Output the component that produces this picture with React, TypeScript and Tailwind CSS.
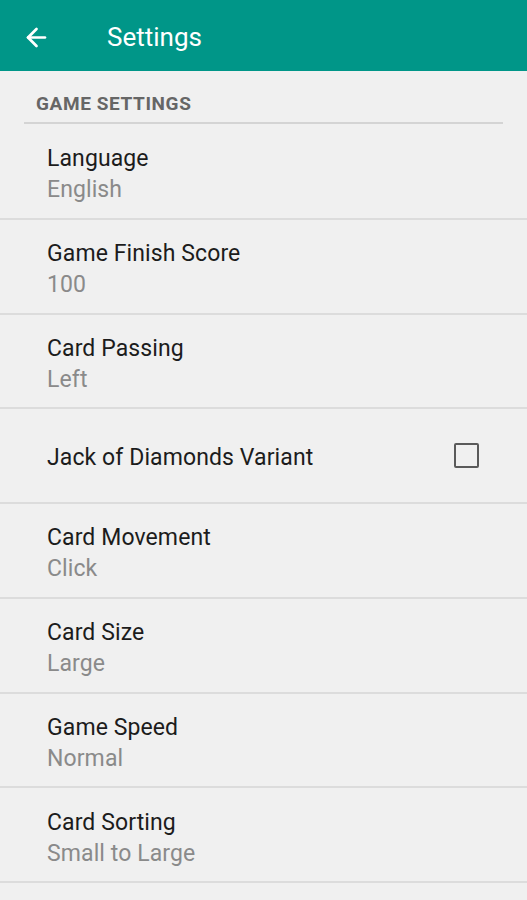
import { ArrowLeft } from 'lucide-react'

const items: { title: string; value?: string; checkbox?: boolean }[] = [
  { title: 'Language', value: 'English' },
  { title: 'Game Finish Score', value: '100' },
  { title: 'Card Passing', value: 'Left' },
  { title: 'Jack of Diamonds Variant', checkbox: true },
  { title: 'Card Movement', value: 'Click' },
  { title: 'Card Size', value: 'Large' },
  { title: 'Game Speed', value: 'Normal' },
  { title: 'Card Sorting', value: 'Small to Large' },
]

export default function App() {
  return (
    <div className="w-[527px] h-[900px] overflow-hidden bg-[#f0f0f0] font-['Roboto',sans-serif]">
      <header className="h-[71px] bg-[#009688] flex items-center pt-[3px]">
        <ArrowLeft className="ml-[22px] text-white" size={29} strokeWidth={2.25} />
        <h1 className="ml-[56px] text-white text-[26px] leading-none">Settings</h1>
      </header>

      <div className="px-[24px]">
        <div className="h-[53px] flex items-end pb-[9px] pl-[12px] border-b-2 border-[#d4d4d4]">
          <span className="text-[19px] font-bold text-[#666] tracking-[0.6px] leading-none">GAME SETTINGS</span>
        </div>
      </div>

      <div className="mt-[1px]">
        {items.map((item, i) => (
          <div
            key={i}
            className="h-[94.75px] border-b-2 border-[#dcdcdc] flex items-center justify-between pl-[47px] pr-[48px]"
          >
            {item.checkbox ? (
              <span className="text-[23px] text-[#1c1c1c] tracking-[0.1px] mt-[6px]">{item.title}</span>
            ) : (
              <div className="flex flex-col mt-[6px]">
                <span className="text-[23px] text-[#1c1c1c] leading-[31px] tracking-[0.1px]">{item.title}</span>
                <span className="text-[23px] text-[#8a8a8a] leading-[31px] tracking-[0.1px]">{item.value}</span>
              </div>
            )}
            {item.checkbox && (
              <div className="w-[25px] h-[25px] border-2 border-[#5a5a5a] rounded-[2px]" />
            )}
          </div>
        ))}
      </div>
    </div>
  )
}
